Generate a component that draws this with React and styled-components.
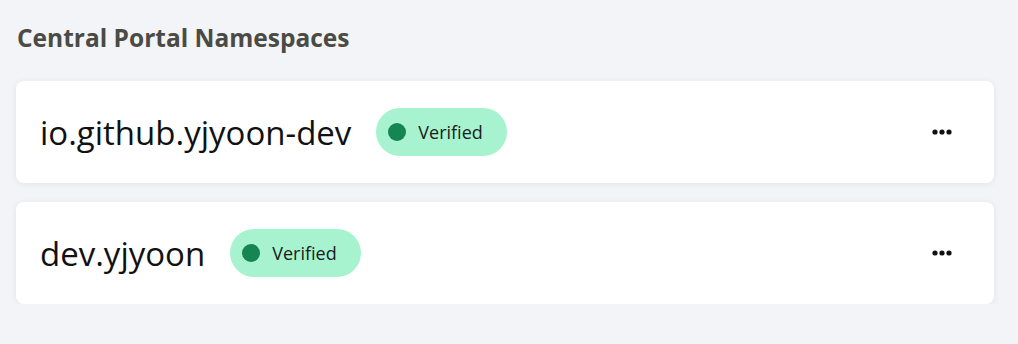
import styled, { createGlobalStyle } from "styled-components"

const GlobalStyle = createGlobalStyle`
    body {
        margin: 0;
        background: #f3f4f8;
        font-family: "Open Sans", "Liberation Sans", sans-serif;
    }
`

const Page = styled.div`
    padding: 21px 24px 0 16px;
    display: flex;
    flex-direction: column;
`

const Heading = styled.h2`
    margin: 0 0 0 1px;
    font-size: 24.5px;
    font-weight: 700;
    color: #4b4a45;
    line-height: 34px;
`

const List = styled.div`
    margin-top: 26px;
    display: flex;
    flex-direction: column;
    gap: 19px;
`

const Card = styled.div`
    height: 102px;
    background: #fff;
    border-radius: 8px;
    box-shadow: 0 1px 6px rgba(30, 35, 70, 0.08);
    display: flex;
    align-items: center;
    padding: 0 32px 0 24px;
`

const Name = styled.span`
    font-size: 33px;
    color: #111;
    margin-right: 25px;
`

const Badge = styled.span`
    display: inline-flex;
    align-items: center;
    gap: 12px;
    height: 48px;
    padding: 0 24px 0 12px;
    border-radius: 24px;
    background: #a7f3d0;
    color: #1b1b1b;
    font-size: 18px;
`

const Dot = styled.span`
    width: 18px;
    height: 18px;
    border-radius: 50%;
    background: #158552;
`

const More = styled.button`
    margin-left: auto;
    width: 40px;
    height: 40px;
    border: 0;
    background: none;
    display: flex;
    align-items: center;
    justify-content: center;
    cursor: pointer;
`

const namespaces = ["io.github.yjyoon-dev", "dev.yjyoon"]

const App = () => {
    return (
        <Page>
            <GlobalStyle />
            <Heading>Central Portal Namespaces</Heading>
            <List>
                {namespaces.map((ns) => (
                    <Card key={ns}>
                        <Name>{ns}</Name>
                        <Badge>
                            <Dot />
                            Verified
                        </Badge>
                        <More aria-label="More">
                            <svg width="20" height="6" viewBox="0 0 20 6">
                                <circle cx="3" cy="3" r="2.6" fill="#111" />
                                <circle cx="10" cy="3" r="2.6" fill="#111" />
                                <circle cx="17" cy="3" r="2.6" fill="#111" />
                            </svg>
                        </More>
                    </Card>
                ))}
            </List>
        </Page>
    )
}

export default App
